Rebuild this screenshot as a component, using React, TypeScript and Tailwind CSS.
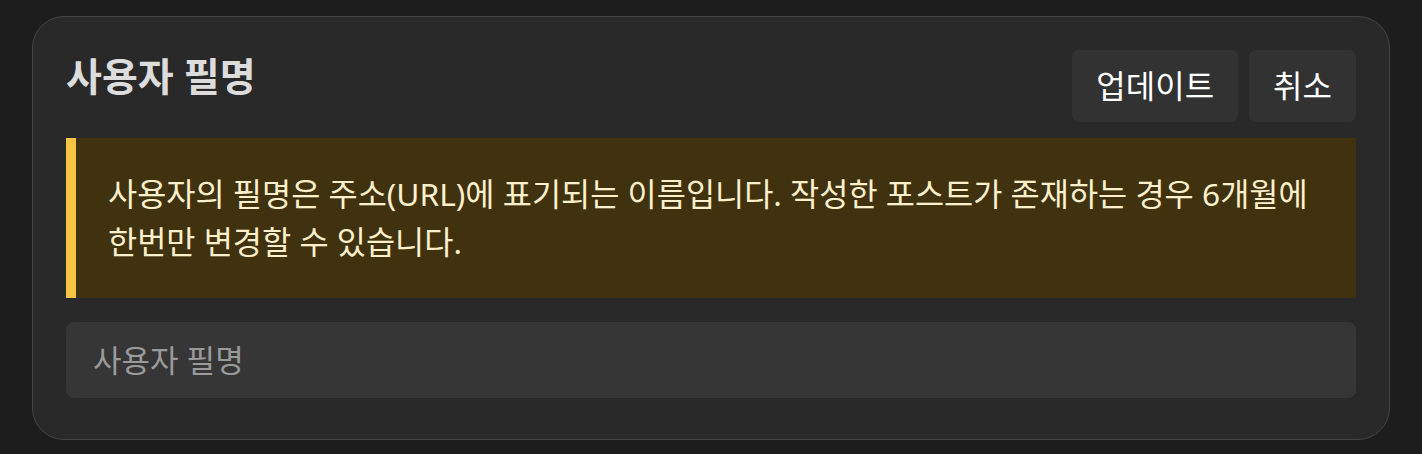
export default function App() {
  return (
    <div
      className="min-h-[454px] bg-[#1d1d1d] px-8 py-4"
      style={{ fontFamily: '"Noto Sans", "Noto Sans CJK KR", sans-serif' }}
    >
      <div className="rounded-[32px] border border-[#454545] bg-[#292929] px-[33px] pt-[33px] pb-[41px]">
        <div className="flex items-start justify-between">
          <h2 className="text-[39px] leading-[52px] font-bold text-[#dcdcdc]">사용자 필명</h2>
          <div className="flex gap-[11px]">
            <button className="h-[72px] rounded-[7px] bg-[#323232] px-6 text-[32px] text-white">업데이트</button>
            <button className="h-[72px] rounded-[7px] bg-[#323232] px-6 text-[32px] text-white">취소</button>
          </div>
        </div>
        <div className="mt-4 border-l-[10px] border-[#f6c544] bg-[#40310f] py-8 pr-8 pl-8 text-[31.7px] leading-[48px] break-keep text-[#fdf0cc]">
          사용자의 필명은 주소(URL)에 표기되는 이름입니다. 작성한 포스트가 존재하는 경우 6개월에 한번만 변경할 수 있습니다.
        </div>
        <input
          placeholder="사용자 필명"
          className="mt-6 block h-[76px] w-full rounded-[8px] bg-[#363636] px-[27px] text-[31px] text-white outline-none placeholder:text-[#9a9a9a]"
        />
      </div>
    </div>
  )
}
